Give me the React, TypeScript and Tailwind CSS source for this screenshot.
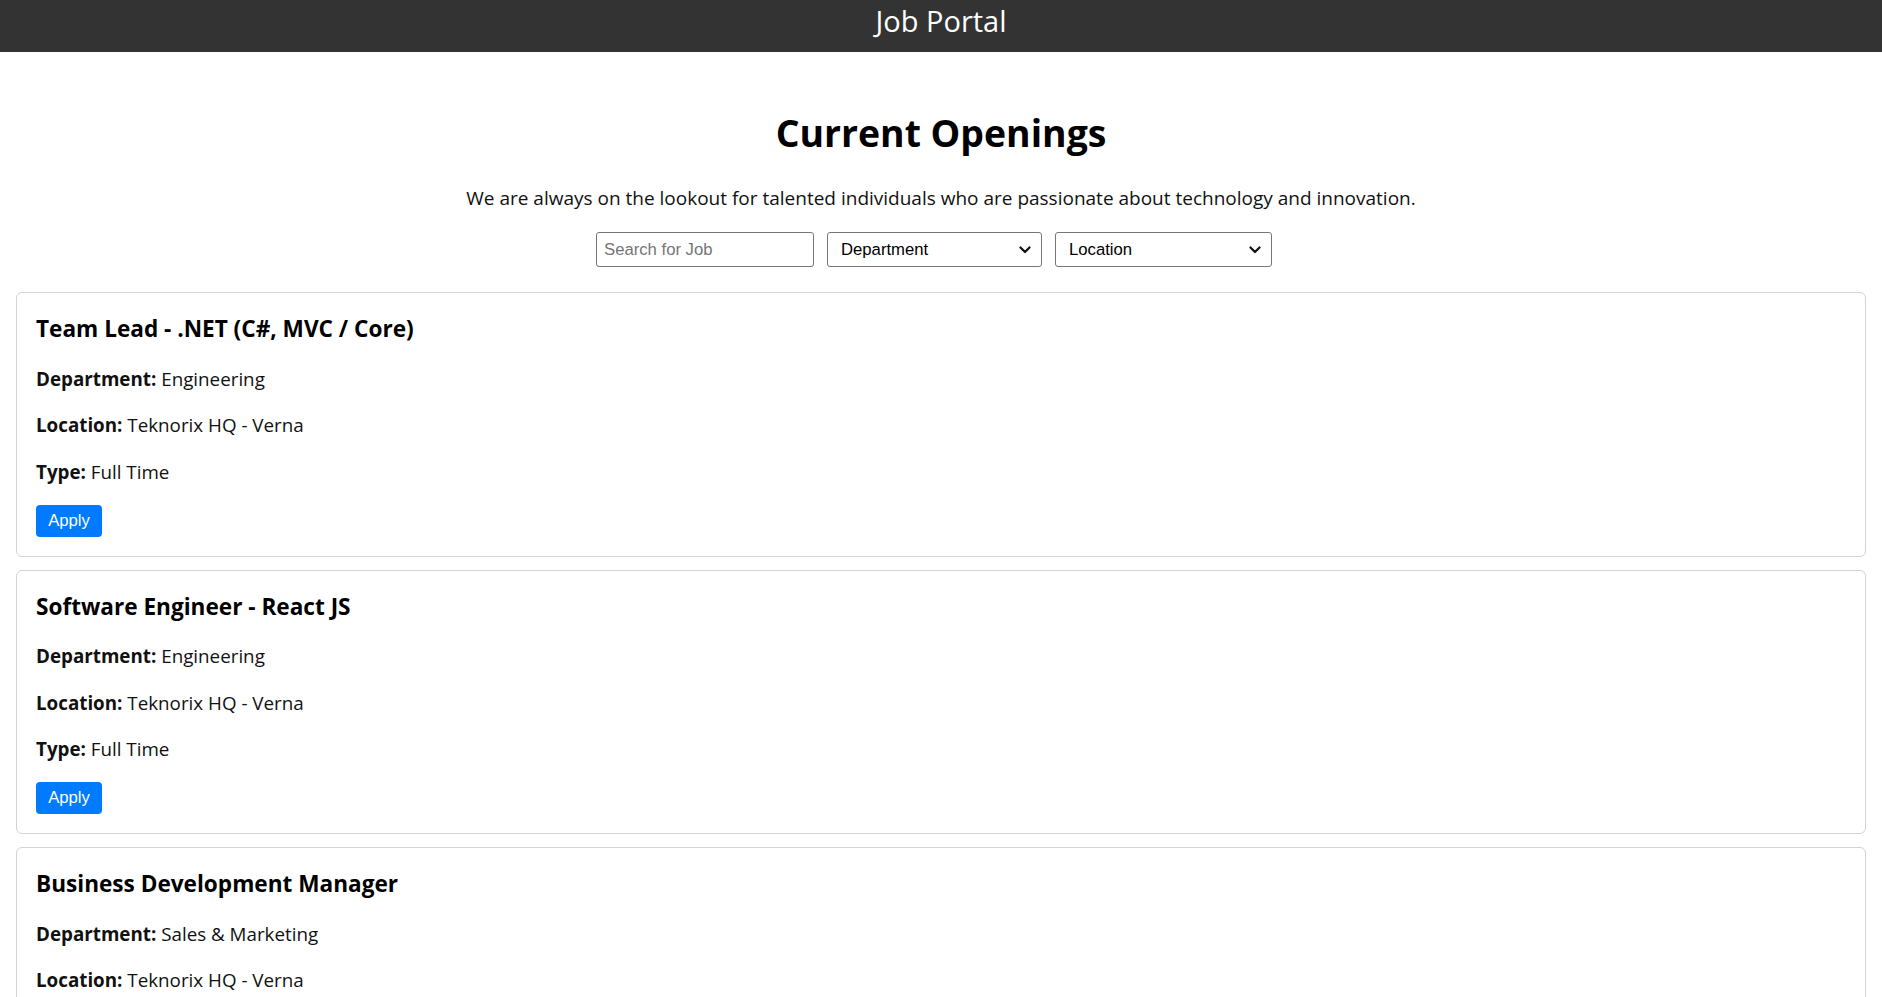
import React from "react";

type Job = { title: string; department: string; location: string; type: string };

const jobs: Job[] = [
  { title: "Team Lead - .NET (C#, MVC / Core)", department: "Engineering", location: "Teknorix HQ - Verna", type: "Full Time" },
  { title: "Software Engineer - React JS", department: "Engineering", location: "Teknorix HQ - Verna", type: "Full Time" },
  { title: "Business Development Manager", department: "Sales & Marketing", location: "Teknorix HQ - Verna", type: "Full Time" },
];

function Chevron() {
  return (
    <svg
      className="pointer-events-none absolute right-[11px] top-1/2 -translate-y-1/2"
      width="12"
      height="8"
      viewBox="0 0 12 8"
      fill="none"
    >
      <path d="M1.5 1.5 L6 6 L10.5 1.5" stroke="#111" strokeWidth="2.2" strokeLinecap="round" strokeLinejoin="round" />
    </svg>
  );
}

function SelectBox({ label, width }: { label: string; width: string }) {
  return (
    <div className={`relative ${width} h-[35px]`}>
      <select
        className="h-full w-full appearance-none rounded-[3px] border border-[#767676] bg-white pl-[13px] pr-[30px] font-['Liberation_Sans',Arial,sans-serif] text-[16.7px] text-black outline-none"
        defaultValue=""
      >
        <option value="">{label}</option>
      </select>
      <Chevron />
    </div>
  );
}

function JobCard({ job }: { job: Job }) {
  return (
    <div className="rounded-[6px] border border-[#d3d3d3] bg-white px-[19px] pt-[21px] pb-[19px]">
      <h3 className="text-[22.6px] font-bold leading-[30px] text-black">{job.title}</h3>
      <p className="mt-[21.5px] text-[18.8px] leading-[26px]">
        <span className="font-bold">Department:</span> {job.department}
      </p>
      <p className="mt-[20.5px] text-[18.8px] leading-[26px]">
        <span className="font-bold">Location:</span> {job.location}
      </p>
      <p className="mt-[20.5px] text-[18.8px] leading-[26px]">
        <span className="font-bold">Type:</span> {job.type}
      </p>
      <button className="mt-[20px] flex h-[32px] w-[66px] items-center justify-center rounded-[4px] bg-[#007bff] font-['Liberation_Sans',Arial,sans-serif] text-[16.7px] text-white">
        Apply
      </button>
    </div>
  );
}

export default function App() {
  return (
    <div className="min-h-screen bg-white font-['Open_Sans','Noto_Sans',sans-serif] text-[#111]">
      <header className="flex h-[52px] justify-center bg-[#333333]">
        <h1 className="text-[29px] font-normal leading-[41px] text-white">Job Portal</h1>
      </header>

      <h2 className="mt-[56px] text-center text-[37.4px] font-bold leading-[50px] text-black">Current Openings</h2>
      <p className="mt-[27px] text-center text-[19px] leading-[26px]">
        We are always on the lookout for talented individuals who are passionate about technology and innovation.
      </p>

      <div className="mt-[21px] flex justify-center gap-[13px] pr-[14px]">
        <input
          type="text"
          placeholder="Search for Job"
          className="h-[35px] w-[218px] rounded-[3px] border border-[#767676] bg-white px-[7px] font-['Liberation_Sans',Arial,sans-serif] text-[16.7px] text-black outline-none placeholder:text-[#757575]"
        />
        <SelectBox label="Department" width="w-[215px]" />
        <SelectBox label="Location" width="w-[217px]" />
      </div>

      <div className="mx-[16px] mt-[25px] flex flex-col gap-[13px] pb-[16px]">
        {jobs.map((job) => (
          <JobCard key={job.title} job={job} />
        ))}
      </div>
    </div>
  );
}
